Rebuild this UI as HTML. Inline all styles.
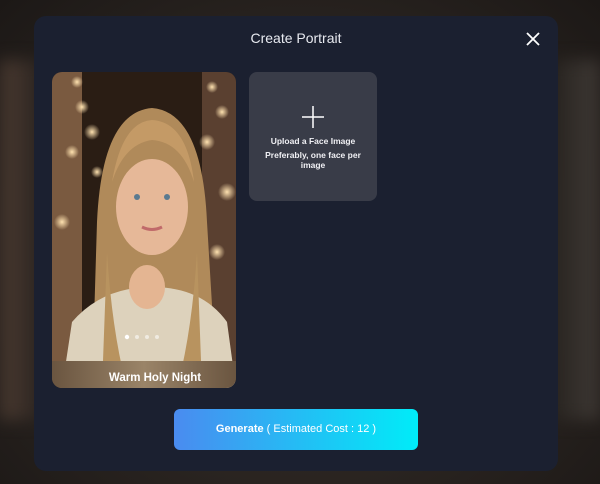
<!DOCTYPE html>
<html><head><meta charset="utf-8"><style>
*{margin:0;padding:0;box-sizing:border-box}
body{width:600px;height:484px;overflow:hidden;font-family:"Liberation Sans",sans-serif;
background:radial-gradient(ellipse at 50% 55%,#3a332e 0%,#2c2622 50%,#1c1816 100%);position:relative}
.bgl{position:absolute;left:0;top:60px;width:40px;height:360px;background:linear-gradient(90deg,#4a3a30,#2e2622);filter:blur(8px)}
.bgr{position:absolute;right:0;top:60px;width:45px;height:360px;background:linear-gradient(270deg,#3e3834,#2a2622);filter:blur(8px)}
.modal{position:absolute;left:34px;top:16px;width:524px;height:455px;background:#1b2030;border-radius:12px}
.title{position:absolute;left:0;width:100%;top:14px;text-align:center;color:#e8eaf0;font-size:14px}
.card{position:absolute;left:18px;top:56px;width:184px;height:316px;border-radius:10px;overflow:hidden}
.upload{position:absolute;left:215px;top:56px;width:128px;height:129px;border-radius:8px;background:#393c48;color:#f0f0f4;font-size:8.5px;font-weight:bold;text-align:center}
.btn{position:absolute;left:140px;top:393px;width:244px;height:41px;border-radius:6px;background:linear-gradient(90deg,#4a8bf0,#00ecf8);color:#fff;font-size:11px;text-align:center;line-height:41px}
</style></head><body>
<div class="bgl"></div><div class="bgr"></div>
<div class="modal">
<div class="title">Create Portrait</div>
<svg width="16" height="16" viewBox="0 0 16 16" style="left:491px;top:15px;position:absolute"><path d="M2 2L14 14M14 2L2 14" stroke="#fff" stroke-width="1.8"/></svg>
<div class="card">
<svg width="184" height="316" viewBox="0 0 184 316">
<defs>
<radialGradient id="b" cx="50%" cy="50%" r="50%"><stop offset="0" stop-color="#ffe2b0"/><stop offset="1" stop-color="#ffe2b0" stop-opacity="0"/></radialGradient>
<linearGradient id="lab" x1="0" x2="1"><stop offset="0" stop-color="#6a5540"/><stop offset=".5" stop-color="#9a8468"/><stop offset="1" stop-color="#6a5540"/></linearGradient>
</defs>
<rect width="184" height="316" fill="#2a1d14"/>
<rect x="0" y="0" width="30" height="316" fill="#7a5a40"/>
<rect x="150" y="0" width="34" height="316" fill="#5a4030"/>
<g fill="url(#b)">
<circle cx="25" cy="10" r="6"/><circle cx="30" cy="35" r="7"/><circle cx="40" cy="60" r="8"/><circle cx="20" cy="80" r="7"/><circle cx="45" cy="100" r="6"/><circle cx="160" cy="15" r="6"/><circle cx="170" cy="40" r="7"/><circle cx="155" cy="70" r="8"/><circle cx="175" cy="120" r="9"/><circle cx="165" cy="180" r="8"/><circle cx="10" cy="150" r="8"/></g>
<path d="M40 316 L45 150 Q50 40 100 36 Q150 40 155 150 L165 316Z" fill="#b08a5a"/>
<ellipse cx="100" cy="135" rx="36" ry="48" fill="#e6b898"/>
<path d="M60 110 Q70 50 100 48 Q135 50 142 110 Q130 70 100 68 Q72 72 60 110Z" fill="#c49a66"/>
<path d="M10 316 L20 250 Q50 215 100 215 Q150 215 175 250 L184 316Z" fill="#ddd2bc"/>
<path d="M50 316 L55 180 Q60 260 75 316Z" fill="#b8935f"/>
<path d="M150 316 L145 180 Q140 260 125 316Z" fill="#b8935f"/>
<ellipse cx="95" cy="215" rx="18" ry="22" fill="#e4b592"/>
<circle cx="85" cy="125" r="3" fill="#5a7a90"/><circle cx="115" cy="125" r="3" fill="#5a7a90"/>
<path d="M90 155 Q100 160 110 155" stroke="#c06a6a" stroke-width="3" fill="none"/>
<rect x="0" y="289" width="184" height="27" fill="url(#lab)"/>
<circle cx="75" cy="265" r="2.2" fill="#fff"/><circle cx="85" cy="265" r="2" fill="#fff" opacity=".55"/><circle cx="95" cy="265" r="2" fill="#fff" opacity=".55"/><circle cx="105" cy="265" r="2" fill="#fff" opacity=".55"/>
<text x="103" y="309" fill="#fff" font-family="Liberation Sans" font-weight="bold" font-size="11.5" text-anchor="middle">Warm Holy Night</text>
</svg>
</div>
<div class="upload">
<svg width="24" height="24" viewBox="0 0 24 24" style="position:absolute;left:52px;top:33px"><path d="M12 1V23M1 12H23" stroke="#fff" stroke-width="1.5"/></svg>
<div style="position:absolute;top:64px;width:100%">Upload a Face Image</div>
<div style="position:absolute;top:78px;left:10px;right:10px;line-height:10px">Preferably, one face per image</div>
</div>
<div class="btn"><b>Generate</b> ( Estimated Cost : 12 )</div>
</div>
</body></html>
